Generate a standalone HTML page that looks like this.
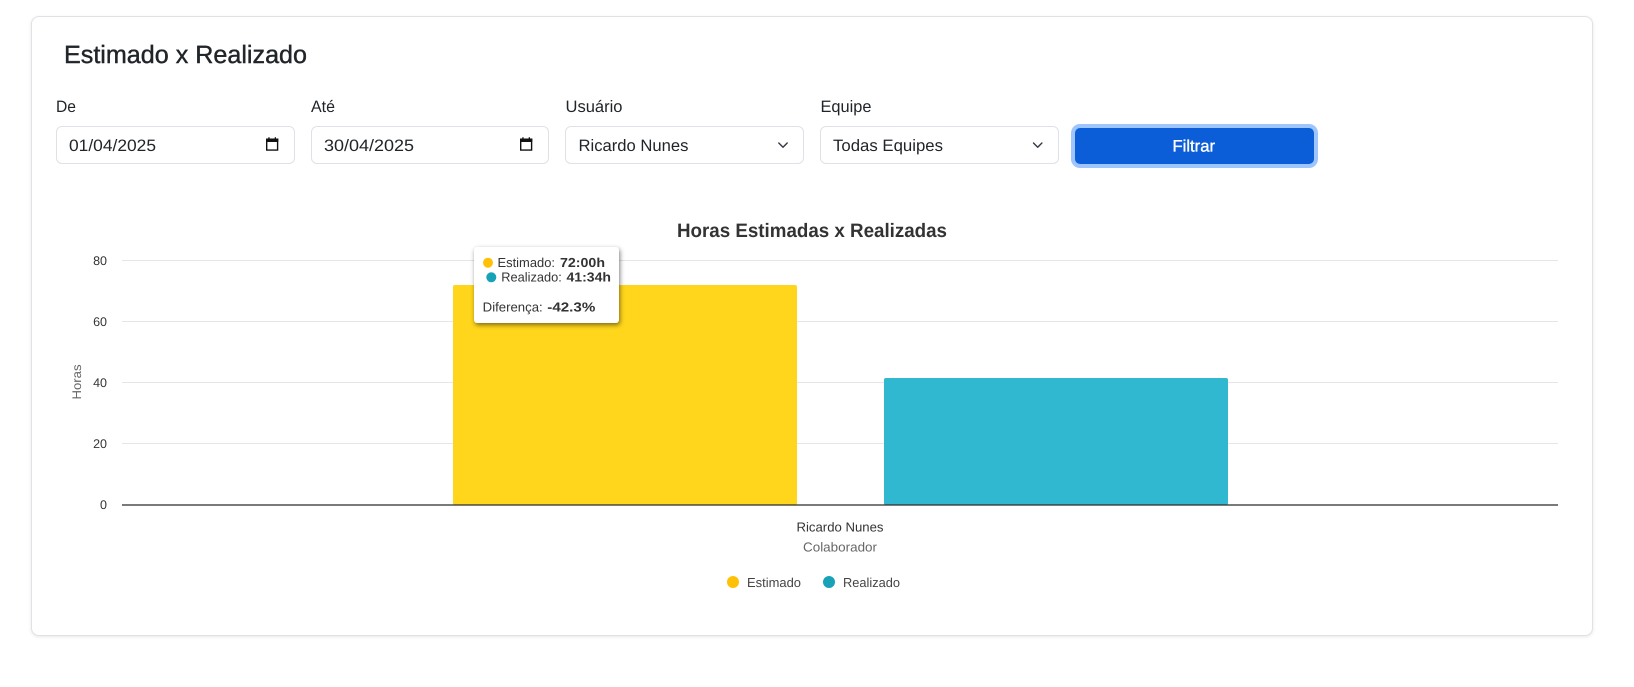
<!DOCTYPE html>
<html lang="pt-BR"><head><meta charset="utf-8"><title>Estimado x Realizado</title>
<style>
html,body{margin:0;padding:0;background:#fff;width:1634px;height:687px;overflow:hidden}
body{position:relative;font-family:"Liberation Sans",sans-serif}
.a{position:absolute;box-sizing:border-box}
.card{left:31px;top:16px;width:1562px;height:620px;border:1px solid #e0e2e6;border-radius:8px;box-shadow:0 1px 3px rgba(0,0,0,.1);background:#fff}
.in{top:126px;height:38px;width:239px;border:1px solid #dee2e6;border-radius:6px;background:#fff}
.btn{left:1075px;top:128px;width:239px;height:36px;background:#0b5ed7;border-radius:5px;box-shadow:0 0 0 4px #9ec5fe}
svg{position:absolute;left:0;top:0}
.tip{left:474px;top:247px;width:145px;height:76px;background:#fff;border-radius:3px;box-shadow:1px 2px 5px rgba(0,0,0,.5)}
text{text-rendering:geometricPrecision}
</style></head><body>
<div class="a card"></div>
<div class="a in" style="left:56px"></div>
<div class="a in" style="left:311px;width:238px"></div>
<div class="a in" style="left:565px"></div>
<div class="a in" style="left:820px"></div>
<div class="a btn"></div>
<svg width="1634" height="687" viewBox="0 0 1634 687" font-family="'Liberation Sans',sans-serif">
<g fill="#212529">
<text x="64" y="63" font-size="25" textLength="243" lengthAdjust="spacingAndGlyphs" stroke="#212529" stroke-width=".4">Estimado x Realizado</text>
<text x="56" y="112" font-size="16.500" textLength="20" lengthAdjust="spacingAndGlyphs">De</text>
<text x="311" y="112" font-size="16.500" textLength="24" lengthAdjust="spacingAndGlyphs">Até</text>
<text x="565.500" y="112" font-size="16.500" textLength="57" lengthAdjust="spacingAndGlyphs">Usuário</text>
<text x="820.500" y="112" font-size="16.500" textLength="51" lengthAdjust="spacingAndGlyphs">Equipe</text>
<text x="69" y="151" font-size="16.500" textLength="87" lengthAdjust="spacingAndGlyphs">01/04/2025</text>
<text x="324" y="151" font-size="16.500" textLength="90" lengthAdjust="spacingAndGlyphs">30/04/2025</text>
<text x="578.500" y="151" font-size="16.500" textLength="110" lengthAdjust="spacingAndGlyphs">Ricardo Nunes</text>
<text x="833" y="151" font-size="16.500" textLength="110" lengthAdjust="spacingAndGlyphs">Todas Equipes</text>
</g>
<g fill="none" stroke="#111" stroke-width="1.400">
<path d="M266.700 139.200h10.900v10.900h-10.900z"/><path d="M520.700 139.200h10.900v10.900h-10.900z"/>
</g>
<path fill="#111" d="M266 138.500h12.300v3.500H266zM268.300 137.200h1.300v1.500h-1.300zM274.700 137.200h1.300v1.500h-1.300zM520 138.500h12.300v3.500H520zM522.300 137.200h1.300v1.500h-1.300zM528.700 137.200h1.300v1.500h-1.300z"/>
<g fill="none" stroke="#343a40" stroke-width="1.400" stroke-linecap="round" stroke-linejoin="round">
<path d="M778.800 143l4.200 4.200 4.200-4.200"/><path d="M1033.500 143l4.200 4.200 4.200-4.200"/>
</g>
<text x="1172.500" y="151.500" font-size="16.500" fill="#fff" stroke="#fff" stroke-width=".35" textLength="42.500" lengthAdjust="spacingAndGlyphs">Filtrar</text>
<text x="677" y="237" font-size="19.500" font-weight="700" fill="#333" textLength="270" lengthAdjust="spacingAndGlyphs">Horas Estimadas x Realizadas</text>
<g stroke="#e6e6e6" stroke-width="1"><path d="M122 260.500H1558M122 321.500H1558M122 382.500H1558M122 443.500H1558"/></g>
<rect x="453" y="285" width="344" height="220" rx="2" fill="#ffd61c"/>
<rect x="884" y="378" width="344" height="127" rx="2" fill="#2fb8d0"/>
<path d="M122 505H1558" stroke="#2b2b2b" stroke-width="1.300"/>
<g font-size="12.500" fill="#333" text-anchor="end">
<text x="107" y="265">80</text><text x="107" y="326">60</text><text x="107" y="387">40</text><text x="107" y="448">20</text><text x="107" y="509">0</text>
</g>
<text transform="translate(81,399.500) rotate(-90)" font-size="12.500" fill="#666" textLength="35" lengthAdjust="spacingAndGlyphs">Horas</text>
<text x="796.500" y="531.500" font-size="13" fill="#333" textLength="87" lengthAdjust="spacingAndGlyphs">Ricardo Nunes</text>
<text x="803" y="551.500" font-size="13" fill="#666" textLength="74" lengthAdjust="spacingAndGlyphs">Colaborador</text>
<circle cx="733" cy="582" r="6" fill="#ffc107"/>
<text x="747" y="587" font-size="13" fill="#444" textLength="54" lengthAdjust="spacingAndGlyphs">Estimado</text>
<circle cx="829" cy="582" r="6" fill="#17a2b8"/>
<text x="843" y="587" font-size="13" fill="#444" textLength="57" lengthAdjust="spacingAndGlyphs">Realizado</text>
</svg>
<div class="a tip"></div>
<svg width="1634" height="687" viewBox="0 0 1634 687" font-family="'Liberation Sans',sans-serif">
<circle cx="488" cy="262.700" r="5" fill="#ffc107"/>
<circle cx="491.300" cy="277.300" r="5" fill="#17a2b8"/>
<g font-size="13" fill="#333">
<text x="497.500" y="266.800" textLength="57.500" lengthAdjust="spacingAndGlyphs">Estimado:</text>
<text x="560" y="266.800" font-weight="700" textLength="45" lengthAdjust="spacingAndGlyphs">72:00h</text>
<text x="501.300" y="281.500" textLength="60.500" lengthAdjust="spacingAndGlyphs">Realizado:</text>
<text x="566.500" y="281.500" font-weight="700" textLength="44.500" lengthAdjust="spacingAndGlyphs">41:34h</text>
<text x="482.700" y="311.500" textLength="60" lengthAdjust="spacingAndGlyphs">Diferença:</text>
<text x="547.300" y="311.500" font-weight="700" textLength="48" lengthAdjust="spacingAndGlyphs">-42.3%</text>
</g>
</svg>
</body></html>
